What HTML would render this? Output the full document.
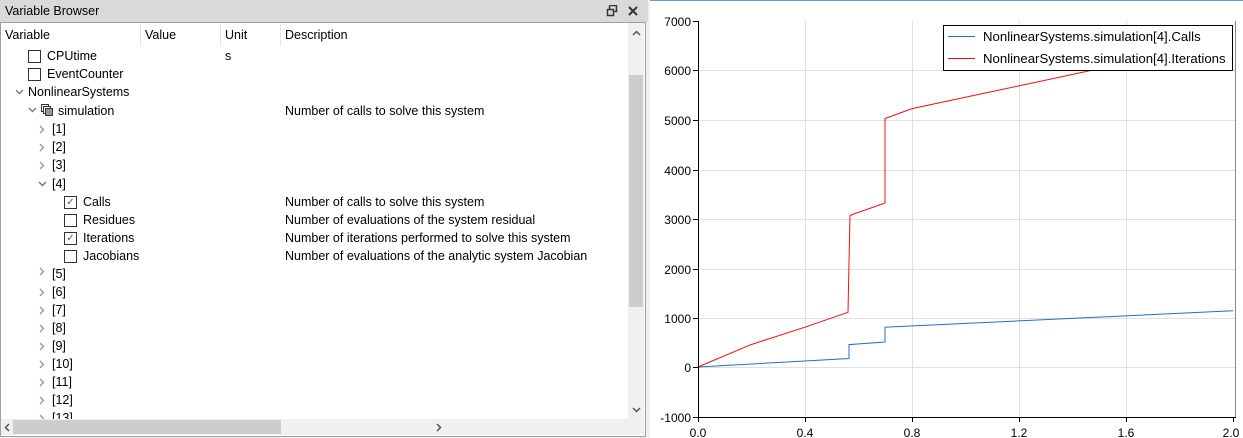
<!DOCTYPE html><html><head><style>
body{margin:0;width:1243px;height:438px;overflow:hidden;background:#f0f0f0;font-family:"Liberation Sans",sans-serif;font-size:12.5px;color:#000;position:relative}
.a{position:absolute}
.t{position:absolute;white-space:nowrap;line-height:14px}
.cb{position:absolute;width:11px;height:11px;border:1px solid #333;background:#fff}
</style></head><body>
<div class="a" style="left:0;top:0;width:648px;height:22px;background:#d9d9d9"></div>
<div class="t" style="left:5px;top:4px">Variable Browser</div>
<svg class="a" style="left:606px;top:5px" width="12" height="12"><path d="M3.5 0.5h7v6h-2M1.5 4.5h6v6h-6z M3.5 0.5v4" fill="none" stroke="#333" stroke-width="1.5"/></svg>
<svg class="a" style="left:628px;top:6px" width="10" height="10"><path d="M1 1L9 9M9 1L1 9" stroke="#333" stroke-width="2"/></svg>
<div class="a" style="left:0;top:22px;width:644px;height:413px;border:1px solid #a0a0a0;background:#fff"></div>
<div class="t" style="left:5px;top:28px">Variable</div>
<div class="t" style="left:145px;top:28px">Value</div>
<div class="t" style="left:225px;top:28px">Unit</div>
<div class="t" style="left:285px;top:28px">Description</div>
<div class="a" style="left:140px;top:24px;width:1px;height:22px;background:#e5e5e5"></div>
<div class="a" style="left:220px;top:24px;width:1px;height:22px;background:#e5e5e5"></div>
<div class="a" style="left:280px;top:24px;width:1px;height:22px;background:#e5e5e5"></div>
<svg class="a" style="left:39px;top:267px" width="6" height="9"><path d="M1 1L4.5 4.5L1 8" fill="none" stroke="#999" stroke-width="1.4"/></svg><div class="t" style="left:52px;top:267px">[5]</div>
<svg class="a" style="left:39px;top:288px" width="6" height="9"><path d="M1 1L4.5 4.5L1 8" fill="none" stroke="#999" stroke-width="1.4"/></svg><div class="t" style="left:52px;top:285px">[6]</div>
<svg class="a" style="left:39px;top:306px" width="6" height="9"><path d="M1 1L4.5 4.5L1 8" fill="none" stroke="#999" stroke-width="1.4"/></svg><div class="t" style="left:52px;top:303px">[7]</div>
<svg class="a" style="left:39px;top:324px" width="6" height="9"><path d="M1 1L4.5 4.5L1 8" fill="none" stroke="#999" stroke-width="1.4"/></svg><div class="t" style="left:52px;top:321px">[8]</div>
<svg class="a" style="left:39px;top:342px" width="6" height="9"><path d="M1 1L4.5 4.5L1 8" fill="none" stroke="#999" stroke-width="1.4"/></svg><div class="t" style="left:52px;top:339px">[9]</div>
<svg class="a" style="left:39px;top:360px" width="6" height="9"><path d="M1 1L4.5 4.5L1 8" fill="none" stroke="#999" stroke-width="1.4"/></svg><div class="t" style="left:52px;top:357px">[10]</div>
<svg class="a" style="left:39px;top:378px" width="6" height="9"><path d="M1 1L4.5 4.5L1 8" fill="none" stroke="#999" stroke-width="1.4"/></svg><div class="t" style="left:52px;top:375px">[11]</div>
<svg class="a" style="left:39px;top:396px" width="6" height="9"><path d="M1 1L4.5 4.5L1 8" fill="none" stroke="#999" stroke-width="1.4"/></svg><div class="t" style="left:52px;top:393px">[12]</div>
<svg class="a" style="left:39px;top:414px" width="6" height="9"><path d="M1 1L4.5 4.5L1 8" fill="none" stroke="#999" stroke-width="1.4"/></svg><div class="t" style="left:52px;top:411px">[13]</div>
<div class="a" style="left:628px;top:23px;width:16px;height:397px;background:#f0f0f0"></div>
<div class="a" style="left:629px;top:75px;width:14px;height:232px;background:#cdcdcd"></div>
<svg class="a" style="left:632px;top:30px" width="9" height="6"><path d="M1 5L4.5 1.5L8 5" fill="none" stroke="#555" stroke-width="1.5"/></svg>
<svg class="a" style="left:632px;top:407px" width="9" height="6"><path d="M1 1L4.5 4.5L8 1" fill="none" stroke="#555" stroke-width="1.5"/></svg>
<div class="a" style="left:1px;top:419px;width:643px;height:16px;background:#f0f0f0"></div>
<div class="a" style="left:13px;top:420px;width:268px;height:14px;background:#cdcdcd"></div>
<svg class="a" style="left:4px;top:423px" width="6" height="9"><path d="M5 1L1.5 4.5L5 8" fill="none" stroke="#555" stroke-width="1.5"/></svg>
<svg class="a" style="left:436px;top:423px" width="6" height="9"><path d="M1 1L4.5 4.5L1 8" fill="none" stroke="#555" stroke-width="1.5"/></svg>
<div class="cb" style="left:28px;top:50px"></div><div class="t" style="left:47px;top:49px">CPUtime</div><div class="t" style="left:225px;top:49px">s</div>
<div class="cb" style="left:28px;top:68px"></div><div class="t" style="left:47px;top:67px">EventCounter</div>
<svg class="a" style="left:15px;top:89px" width="9" height="6"><path d="M1 1L4.5 4.5L8 1" fill="none" stroke="#777" stroke-width="1.4"/></svg><div class="t" style="left:28px;top:85px">NonlinearSystems</div>
<svg class="a" style="left:28px;top:107px" width="9" height="6"><path d="M1 1L4.5 4.5L8 1" fill="none" stroke="#777" stroke-width="1.4"/></svg>
<svg class="a" style="left:41px;top:104px" width="12" height="12"><rect x="0.5" y="0.5" width="7" height="7" fill="#fff" stroke="#333"/><rect x="2.5" y="2.5" width="7" height="7" fill="#fff" stroke="#333"/><rect x="4.5" y="4.5" width="7" height="7" fill="#999" stroke="#333"/></svg>
<div class="t" style="left:58px;top:104px">simulation</div><div class="t" style="left:285px;top:104px">Number of calls to solve this system</div>
<svg class="a" style="left:39px;top:125px" width="6" height="9"><path d="M1 1L4.5 4.5L1 8" fill="none" stroke="#999" stroke-width="1.4"/></svg><div class="t" style="left:52px;top:122px">[1]</div>
<svg class="a" style="left:39px;top:143px" width="6" height="9"><path d="M1 1L4.5 4.5L1 8" fill="none" stroke="#999" stroke-width="1.4"/></svg><div class="t" style="left:52px;top:140px">[2]</div>
<svg class="a" style="left:39px;top:161px" width="6" height="9"><path d="M1 1L4.5 4.5L1 8" fill="none" stroke="#999" stroke-width="1.4"/></svg><div class="t" style="left:52px;top:158px">[3]</div>
<svg class="a" style="left:38px;top:181px" width="9" height="6"><path d="M1 1L4.5 4.5L8 1" fill="none" stroke="#777" stroke-width="1.4"/></svg><div class="t" style="left:52px;top:177px">[4]</div>
<div class="cb" style="left:64px;top:196px;font-size:10px;line-height:11px;text-align:center;color:#555">✓</div><div class="t" style="left:83px;top:195px">Calls</div><div class="t" style="left:285px;top:195px">Number of calls to solve this system</div>
<div class="cb" style="left:64px;top:214px"></div><div class="t" style="left:83px;top:213px">Residues</div><div class="t" style="left:285px;top:213px">Number of evaluations of the system residual</div>
<div class="cb" style="left:64px;top:232px;font-size:10px;line-height:11px;text-align:center;color:#555">✓</div><div class="t" style="left:83px;top:231px">Iterations</div><div class="t" style="left:285px;top:231px">Number of iterations performed to solve this system</div>
<div class="cb" style="left:64px;top:250px"></div><div class="t" style="left:83px;top:249px">Jacobians</div><div class="t" style="left:285px;top:249px">Number of evaluations of the analytic system Jacobian</div>
<div class="a" style="left:650px;top:0;width:593px;height:438px;background:#fff"></div>
<div class="a" style="left:650px;top:0;width:593px;height:1px;background:#6d9cc8"></div>
<svg class="a" style="left:0;top:0" width="1243" height="438">
<g stroke="#e0e0e0" stroke-width="1">
<line x1="698" y1="70.5" x2="1236" y2="70.5"/><line x1="698" y1="120.5" x2="1236" y2="120.5"/><line x1="698" y1="170.5" x2="1236" y2="170.5"/><line x1="698" y1="219.5" x2="1236" y2="219.5"/><line x1="698" y1="269.5" x2="1236" y2="269.5"/><line x1="698" y1="318.5" x2="1236" y2="318.5"/><line x1="698" y1="367.5" x2="1236" y2="367.5"/>
<line x1="805.5" y1="21" x2="805.5" y2="417"/><line x1="912.5" y1="21" x2="912.5" y2="417"/><line x1="1019.5" y1="21" x2="1019.5" y2="417"/><line x1="1126.5" y1="21" x2="1126.5" y2="417"/>
</g>
<line x1="1235.5" y1="21" x2="1235.5" y2="417" stroke="#888"/>
<polyline fill="none" stroke="#1f6fd0" points="698,367 849,358.5 849,344.6 885,342 885,327.2 1233,310.8"/>
<polyline fill="none" stroke="#f01010" points="698,367 751,344.6 805,327.2 848,312.3 849,262.6 850,215.4 885,203 885,118.5 912,108.6 1099,68.8 1233,34"/>
<g stroke="#000"><line x1="698.5" y1="21" x2="698.5" y2="418"/><line x1="698" y1="417.5" x2="1236" y2="417.5"/>
<line x1="693" y1="21.5" x2="698" y2="21.5"/><line x1="693" y1="70.5" x2="698" y2="70.5"/><line x1="693" y1="120.5" x2="698" y2="120.5"/><line x1="693" y1="170.5" x2="698" y2="170.5"/><line x1="693" y1="219.5" x2="698" y2="219.5"/><line x1="693" y1="269.5" x2="698" y2="269.5"/><line x1="693" y1="318.5" x2="698" y2="318.5"/><line x1="693" y1="367.5" x2="698" y2="367.5"/><line x1="693" y1="417.5" x2="698" y2="417.5"/>
<line x1="698.5" y1="417" x2="698.5" y2="422"/><line x1="805.5" y1="417" x2="805.5" y2="422"/><line x1="912.5" y1="417" x2="912.5" y2="422"/><line x1="1019.5" y1="417" x2="1019.5" y2="422"/><line x1="1126.5" y1="417" x2="1126.5" y2="422"/><line x1="1233.5" y1="417" x2="1233.5" y2="422"/></g>
<g font-family="Liberation Sans,sans-serif" font-size="12" text-anchor="end">
<text x="691" y="26">7000</text><text x="691" y="75">6000</text><text x="691" y="125">5000</text><text x="691" y="175">4000</text><text x="691" y="224">3000</text><text x="691" y="274">2000</text><text x="691" y="323">1000</text><text x="691" y="372">0</text><text x="691" y="422">-1000</text></g>
<g font-family="Liberation Sans,sans-serif" font-size="12" text-anchor="middle">
<text x="698" y="437">0.0</text><text x="805" y="437">0.4</text><text x="912" y="437">0.8</text><text x="1019" y="437">1.2</text><text x="1126" y="437">1.6</text><text x="1231" y="437">2.0</text></g>
<rect x="943.5" y="25.5" width="289" height="45" fill="#fff" stroke="#000"/>
<line x1="948" y1="36.5" x2="975" y2="36.5" stroke="#1f6fd0"/>
<line x1="948" y1="58.5" x2="975" y2="58.5" stroke="#f01010"/>
<g font-family="Liberation Sans,sans-serif" font-size="13.2"><text x="983" y="41">NonlinearSystems.simulation[4].Calls</text><text x="983" y="63">NonlinearSystems.simulation[4].Iterations</text></g>
</svg>
</body></html>
